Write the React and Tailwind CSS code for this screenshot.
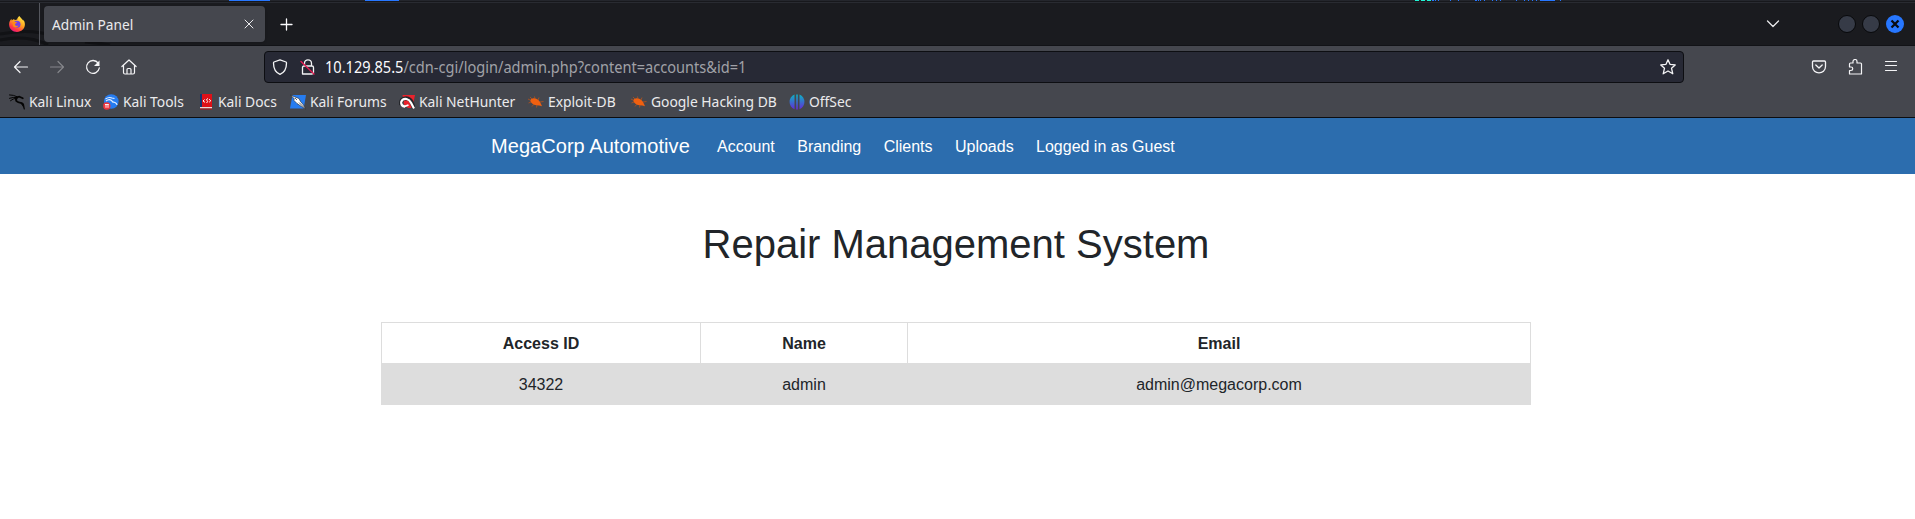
const stroke = { fill: "none", stroke: "currentColor", strokeLinecap: "round", strokeLinejoin: "round" };

function FirefoxLogo() {
  return (
    <svg className="size-4" viewBox="0 0 16 16">
      <defs>
        <linearGradient id="fx" x1="0.85" y1="0" x2="0.25" y2="1">
          <stop offset="0" stopColor="#fff44f" />
          <stop offset="0.45" stopColor="#ffa51f" />
          <stop offset="0.8" stopColor="#ff3647" />
          <stop offset="1" stopColor="#e31587" />
        </linearGradient>
      </defs>
      <path d="M15.4 5.6C15 4.7 14.200 3.700 13.500 3.400C13.700 3.900 13.800 4.300 13.800 4.500C12.700 1.900 10.900 1.500 10.500 0C8.900 .9 8.300 2.400 8.200 3.400C7.200 3.400 6.400 3.800 6 4.200C5.500 3.900 5.200 3.400 5.100 2.900C4 3.400 3.300 4 2.800 4.600C2.500 4.200 2.500 3.300 2.500 2.800C1 4.300 .1 6.300 .1 8.500C.1 12.600 3.600 16 8 16C12.200 16 15.900 12.800 15.900 8.600C15.900 7.500 15.700 6.400 15.400 5.600Z" fill="url(#fx)" />
      <circle cx="8" cy="8.300" r="3.500" fill="#7542e5" />
      <path d="M3.500 6.500C4.800 5.600 6.500 6 8 6.300C7.500 7.500 6.200 7.300 6 8.300C6 9.700 7.600 10.500 9.500 9.500C8.500 12 5 12 4 9.800Z" fill="#ff8a16" />
    </svg>
  );
}

function KaliLinuxIcon() {
  return (
    <svg className="size-4" viewBox="0 0 16 16" fill="none" stroke="#050505" strokeLinecap="round" strokeLinejoin="round">
      <path d="M.5 .9Q4.500 .8 8 2.700M.5 4.300Q4 3 8.500 3.400M1.500 6.700Q4 4.600 7 4.200" strokeWidth="1" />
      <path d="M7.500 3.400L10.500 2.700L13.800 4.200" strokeWidth="1.800" />
      <path d="M8 3.800Q6.300 5.300 7.500 7.100Q9 8.500 11.800 8.900Q14.300 9.600 14.300 11.500" strokeWidth="1.900" />
      <path d="M12.500 9.500Q15 11.500 15.300 15" strokeWidth="1.200" />
    </svg>
  );
}
function KaliToolsIcon() {
  return (
    <svg className="size-4" viewBox="0 0 16 16">
      <circle cx="8.300" cy="7.500" r="7.300" fill="#267cf0" />
      <path d="M2.500 5Q6 2.500 9 4L11.500 4.500M3 7Q6 4.500 8.500 6.500Q9 8.200 12 8.500Q14 9.500 14 11" fill="none" stroke="#e4f0ff" strokeWidth="1.100" />
      <circle cx="3.800" cy="12" r="3.700" fill="#ef343c" />
      <path d="M2 10.500H5.800M3 10.500V13.800M5 10.500V13.800" stroke="#fff" strokeWidth=".9" />
    </svg>
  );
}
function KaliDocsIcon() {
  return (
    <svg className="size-4" viewBox="0 0 16 16">
      <path d="M2 0H14V13H2Z" fill="#df1018" />
      <path d="M2 0H4V13H2Z" fill="#17346f" />
      <path d="M2 13H14V14.500H2Z" fill="#ecd9d9" />
      <path d="M2 14.500H14V15.500H2Z" fill="#b80e13" />
      <path d="M6.500 5.500L5 7L7 8.300M10 4.500Q7.500 5.500 9 6.500Q10.500 7.500 8.500 9M11 5.200L12.800 6.700L11.200 8.200" fill="none" stroke="#fff" />
    </svg>
  );
}
function KaliForumsIcon() {
  return (
    <svg className="size-4" viewBox="0 0 16 16">
      <path d="M2.500 1H16L13.700 14.500H0Z" fill="#267cf0" />
      <path d="M.5 1L5 3L9 4.500L10.500 7.500L13.500 11L15.500 15L11.500 12.500L7 9.500L3.500 6L4.500 5Z" fill="#fff" stroke="#202329" strokeWidth=".6" />
      <path d="M5 4L7 6M9 8.500L14 13.500" stroke="#202329" strokeWidth=".7" />
    </svg>
  );
}
function NetHunterIcon() {
  return (
    <svg className="size-4" viewBox="0 0 16 16">
      <path d="M3.500 1H16L13.300 14H9L5 10Z" fill="#e9232c" />
      <path d="M2 11Q1.300 4.300 7 4.200Q11.500 4.500 13 9L15 14.500" fill="none" stroke="#24262b" strokeWidth="4" />
      <path d="M6 12.600Q1.800 12 2.200 8Q3.300 4.500 7.500 5Q10.500 5.700 12 8.700L15 14.500" fill="none" stroke="#fff" strokeWidth="2.200" />
      <path d="M5 9Q7.500 7.500 9.500 9.500L7 12Q5 11.500 5 9Z" fill="#e9232c" />
      <path d="M5 12.700L9.500 11" stroke="#fff" strokeWidth="1.800" />
    </svg>
  );
}
function ExploitIcon() {
  return (
    <svg className="size-4" viewBox="0 0 16 16">
      <path d="M2.200 6Q3.500 3.800 6.500 4.300Q11.500 5.500 13 10L14 12.300L11.300 11.600Q5 11.500 2.800 8Z" fill="#f06010" />
      <path d="M4 5L2 3M7 5L6.500 2.500M10 6L11 3.500M12 8L15.500 7.500M3 8L.5 9M6 10L4 12.500M9 11L8.500 13.500M0 5L2 6" stroke="#c65414" strokeWidth=".7" />
    </svg>
  );
}
function OffSecIcon() {
  return (
    <svg className="size-4" viewBox="0 0 16 16">
      <defs>
        <linearGradient id="os" x1="0" y1="0" x2="0" y2="1">
          <stop offset="0" stopColor="#0cb4c4" />
          <stop offset="1" stopColor="#6528d8" />
        </linearGradient>
      </defs>
      <path d="M5.500 .6V15.200Q.6 13 .6 8Q.6 3 5.500 .6ZM7.200 .5H8.800V15.500H7.200ZM10.500 .6Q15.400 3 15.400 8Q15.400 13 10.500 15.200Z" fill="url(#os)" />
    </svg>
  );
}

const bookmarks = [
  ["Kali Linux", KaliLinuxIcon, "w-[94px]"],
  ["Kali Tools", KaliToolsIcon, "w-[95px]"],
  ["Kali Docs", KaliDocsIcon, "w-[92px]"],
  ["Kali Forums", KaliForumsIcon, "w-[109px]"],
  ["Kali NetHunter", NetHunterIcon, "w-[129px]"],
  ["Exploit-DB", ExploitIcon, "w-[103px]"],
  ["Google Hacking DB", ExploitIcon, "w-[158px]"],
  ["OffSec", OffSecIcon, "w-[80px]"],
];

function TopStrip() {
  return (
    <div className="h-[3px] bg-[#24262c]">
      <svg className="block h-[3px] w-full" shapeRendering="crispEdges">
        <path d="M229 .5H270M365 .5H399M1432 .5h2M1435 .5h1M1438 .5h1M1450 .5h1M1458 .5h1M1475 .5h2M1478 .5h1M1480 .5h1M1484 .5h1M1492 .5h1M1496 .5h1M1500 .5h1M1516 .5h1M1524 .5h1M1528 .5h1M1532 .5h1M1536 .5h1M1540 .5h15M1560 .5h1" stroke="#2777ff" />
        <path d="M1415 .5h4M1421 .5h4M1427 .5h4" stroke="#20f5d5" />
        <path d="M0 1.500H1915" stroke="#17181c" />
        <path d="M0 2.500H1915" stroke="#292b31" />
      </svg>
    </div>
  );
}

function TabBar() {
  return (
    <div className="relative flex h-[43px] items-center border-b border-[#121317] bg-[#1a1b1f]">
      <svg className="absolute left-0 top-0 h-[42px] w-[130px]" fill="none">
        <path d="M0 31Q30 25 55 33M0 37Q28 31 48 42M85 39Q98 40 110 42" stroke="#111215" strokeWidth="3" />
      </svg>
      <div className="relative flex h-full w-[40px] items-center border-r border-[#55575e] pl-[9px]"><FirefoxLogo /></div>
      <div className="relative ml-1 flex h-9 w-[221px] items-center justify-between rounded-[4px] bg-[#45474e] pl-2 pr-[10px] text-[#ebebed] shadow-sm">
        <span className="origin-left scale-x-[0.935] whitespace-nowrap pb-px text-[14.670px]">Admin Panel</span>
        <svg className="size-3" viewBox="0 0 12 12" {...stroke}><path d="M2 2L10 10M10 2L2 10" /></svg>
      </div>
      <svg className="ml-[15px] mt-px size-[13px]" viewBox="0 0 13 13" {...stroke} stroke="#fbfbfe" strokeWidth="1.300"><path d="M6.500 1V12M1 6.500H12" /></svg>
      <div className="ml-auto flex items-center pr-[11px] text-[#e8e8ea]">
        <svg className="mr-[58px] h-3 w-[14px]" viewBox="0 0 14 12" {...stroke} strokeWidth="1.300"><path d="M1.500 3L7 8.500L12.500 3" /></svg>
        <div className="flex gap-[6px]">
          <span className="size-[18px] rounded-full border border-[#08090b] bg-[#363b47]" />
          <span className="size-[18px] rounded-full border border-[#08090b] bg-[#363b47]" />
          <svg className="size-[18px]" viewBox="0 0 18 18"><circle cx="9" cy="9" r="9" fill="#2777ff" /><path d="M5.500 5.500L12.500 12.500M12.500 5.500L5.500 12.500" stroke="#090b10" strokeWidth="2.300" /></svg>
        </div>
      </div>
    </div>
  );
}

function Toolbar() {
  return (
    <div className="flex h-[41px] items-center text-[#f4f4f6]">
      <div className="flex w-[264px] items-center gap-5 pl-[13px]">
        <svg className="size-4" viewBox="0 0 16 16" {...stroke} strokeWidth="1.200"><path d="M14.500 8H1.500M7 2.500L1.500 8L7 13.500" /></svg>
        <svg className="size-4 text-[#85868b]" viewBox="0 0 16 16" {...stroke} strokeWidth="1.200"><path d="M1.500 8H14.500M9 2.500L14.500 8L9 13.500" /></svg>
        <svg className="size-4" viewBox="0 0 16 16" {...stroke} strokeWidth="1.300"><path d="M13.200 4.200A6.400 6.400 0 1 0 14.300 9" /><path d="M14.500 1.500V7H9Z" fill="currentColor" stroke="none" /></svg>
        <svg className="size-4" viewBox="0 0 16 16" {...stroke} strokeWidth="1.200"><path d="M.9 7.500L8 1L15.100 7.500M2.500 6.500V13.500Q2.500 15 4 15H12Q13.500 15 13.500 13.500V6.500M6 15V10.500Q6 9.500 7 9.500H9Q10 9.500 10 10.500V15" /></svg>
      </div>
      <div className="flex h-8 w-[1420px] items-center rounded-[4px] border border-[#0d0e12] bg-[#272935] pl-[7px] pr-[7px]">
        <svg className="size-4" viewBox="0 0 16 16" {...stroke} strokeWidth="1.300"><path d="M8 .8L14 3Q14.500 3.200 14.500 4C14.500 9.500 12.500 13.500 8 15.300C3.500 13.500 1.500 9.500 1.500 4Q1.500 3.200 2 3Z" /></svg>
        <svg className="ml-3 size-4" viewBox="0 0 16 16" {...stroke} strokeWidth="1.300"><path d="M4.500 7V4.300A3.500 3.500 0 0 1 11.500 4.300V7M2.500 15V8.500Q2.500 7 4 7H12Q13.500 7 13.500 8.500V13.500Q13.500 15 12 15H2.500" /><path d="M1 2.500L14 15" stroke="#e31b52" strokeWidth="1.400" /></svg>
        <span className="ml-[9px] origin-left scale-x-[0.911] whitespace-nowrap text-[16px] text-[#a0a1a7]"><span className="text-[#fbfbfe]">10.129.85.5</span>/cdn-cgi/login/admin.php?content=accounts&amp;id=1</span>
        <svg className="ml-auto size-4" viewBox="0 0 16 16" {...stroke} strokeWidth="1.300"><path d="M8 .8L10 5.300L15.200 5.900L11.500 9.200L12.800 14.800L8 12L3.200 14.800L4.500 9.200L.8 5.900L6 5.300Z" /></svg>
      </div>
      <div className="ml-auto flex items-center gap-5 pr-4">
        <svg className="size-4" viewBox="0 0 16 16" {...stroke} strokeWidth="1.300"><path d="M2.500 2H13.500Q14.500 2 14.500 3V7.500C14.500 16 1.500 16 1.500 7.500V3Q1.500 2 2.500 2ZM4.800 6L8 9L11.200 6" /></svg>
        <svg className="size-4" viewBox="0 0 16 16" {...stroke} strokeWidth="1.200"><path d="M2.500 8V5Q2.500 4 3.500 4H6V2.500A2 2 0 0 1 10 2.500V4H13.500Q14.500 4 14.500 5V15H2.500V11.500H4A1.750 1.750 0 0 0 4 8H2.500Z" /></svg>
        <svg className="size-4" viewBox="0 0 16 16" {...stroke} strokeWidth="1.200"><path d="M2.500 2.500H13.500M2.500 6.500H13.500M2.500 11.500H13.500" /></svg>
      </div>
    </div>
  );
}

export default function App() {
  return (
    <div className="h-[519px] overflow-hidden bg-white font-['Liberation_Sans',Arial,sans-serif] text-[#212529]">
      <header className="h-[118px] border-b border-[#0c0d10] bg-[#45474e] font-['Noto_Sans',sans-serif]">
        <TopStrip />
        <TabBar />
        <Toolbar />
        <div className="flex h-[30px] items-center pl-[9px]">
          {bookmarks.map(([name, Icon, width]) => (
            <div key={name} className={`flex shrink-0 items-center gap-1 whitespace-nowrap text-[14.670px] text-[#ebebed] ${width}`}>
              <span className="shrink-0"><Icon /></span><span className="origin-left scale-x-[0.945] pb-[2px]">{name}</span>
            </div>
          ))}
        </div>
      </header>
      <nav className="flex h-14 items-center bg-[#2c6dae] pl-[491px] text-white">
        <span className="mr-[19px] w-[199px] whitespace-nowrap text-[20px] tracking-[0.050px]">MegaCorp Automotive</span>
        <div className="flex pt-px text-[16px]">
          {["Account", "Branding", "Clients", "Uploads", "Logged in as Guest"].map((item) => (
            <a key={item} className="mr-[6.400px] whitespace-nowrap px-2">{item}</a>
          ))}
        </div>
      </nav>
      <main className="pr-[3px]">
        <h1 className="pt-[46px] text-center text-[40px] leading-[48px]">Repair Management System</h1>
        <table className="mx-auto mt-[54px] w-[1150px] table-fixed border-collapse border border-[#ddd] text-center text-[16px] leading-6">
          <colgroup><col className="w-[319px]" /><col className="w-[207px]" /><col /></colgroup>
          <thead><tr>{["Access ID", "Name", "Email"].map((h) => <th key={h} className="border border-[#ddd] px-2 pb-[7px] pt-[9px] font-bold">{h}</th>)}</tr></thead>
          <tbody><tr className="bg-[#ddd]">{["34322", "admin", "admin@megacorp.com"].map((v) => <td key={v} className="border border-[#ddd] px-2 pb-[7px] pt-[9px]">{v}</td>)}</tr></tbody>
        </table>
      </main>
    </div>
  );
}
